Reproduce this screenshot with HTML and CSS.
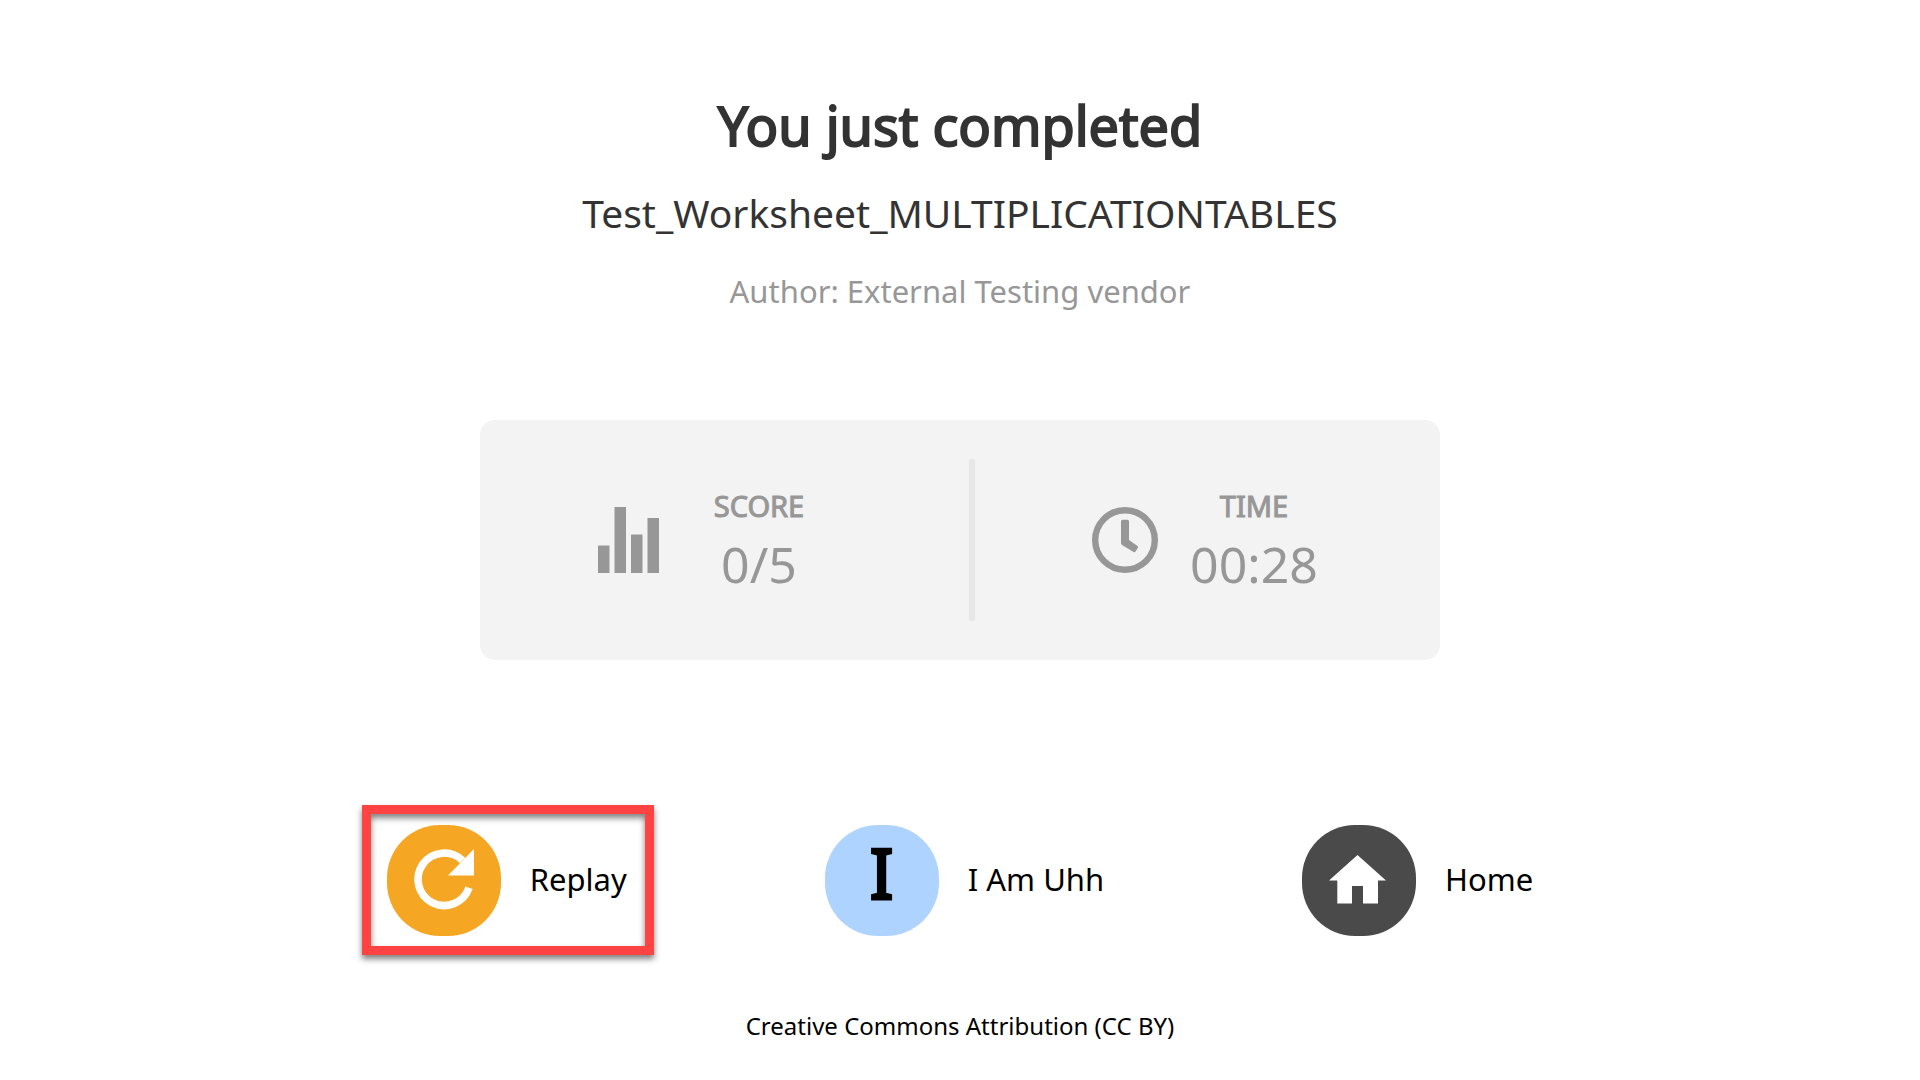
FILE: index.html
```html
<!DOCTYPE html>
<html lang="en">
<head>
<meta charset="utf-8">
<meta name="viewport" content="width=device-width, initial-scale=1">
<title>Worksheet completed</title>
<link rel="stylesheet" href="styles.css">
</head>
<body>
<main class="page">
  <header class="summary">
    <h1 class="title">You just completed</h1>
    <p class="worksheet">Test_Worksheet_MULTIPLICATIONTABLES</p>
    <p class="author">Author: External Testing vendor</p>
  </header>

  <section class="card" aria-label="Results">
    <div class="stat">
      <svg class="stat-icon" viewBox="0 0 66 66" aria-hidden="true">
        <path d="M1 38.500h11.500V66H1zM17.500 0H29v66H17.500zM34 27.500h11.500V66H34zM50.500 11H62v55H50.500z"/>
      </svg>
      <div class="stat-text">
        <h2 class="label">SCORE</h2>
        <p class="value">0/5</p>
      </div>
    </div>
    <div class="divider"></div>
    <div class="stat">
      <svg class="stat-icon" viewBox="0 0 66 66" aria-hidden="true">
        <circle class="clock-ring" cx="33" cy="33" r="29.800"/>
        <path d="M30.500 12.700h5q1.500 0 1.500 1.500V33l8.500 6q1 .8.300 1.900l-2.300 3.700q-.8 1.200-2 .4L30 38q-1-.8-1-2V14.200q0-1.500 1.500-1.500z"/>
      </svg>
      <div class="stat-text">
        <h2 class="label">TIME</h2>
        <p class="value">00:28</p>
      </div>
    </div>
  </section>

  <nav class="actions" aria-label="Next steps">
    <button class="action highlighted" type="button">
      <span class="badge replay">
        <svg class="badge-icon" viewBox="0 0 114 111" aria-hidden="true">
          <path class="replay-arc" d="M82 62.800A26.200 26.200 0 1 1 75.500 35.500"/>
          <path d="M87 24v26.500H61z"/>
        </svg>
      </span>
      <span class="action-name">Replay</span>
    </button>
    <button class="action" type="button">
      <span class="badge profile" aria-hidden="true">I</span>
      <span class="action-name">I Am Uhh</span>
    </button>
    <button class="action" type="button">
      <span class="badge home">
        <svg class="badge-icon" viewBox="0 0 114 111" aria-hidden="true">
          <path d="M55.500 30 84 55.500h-8V78.500H61V61H50v17.500H35.300v-23H27z"/>
        </svg>
      </span>
      <span class="action-name">Home</span>
    </button>
  </nav>

  <footer class="license">Creative Commons Attribution (CC BY)</footer>
</main>
</body>
</html>
```

FILE: styles.css
```css
* { box-sizing: border-box; }

body {
  margin: 0;
  background: #fff;
  color: #000;
  font-family: "Noto Sans", sans-serif;
}

h1, h2, p { margin: 0; font-weight: 400; }

.page {
  display: flex;
  flex-direction: column;
  align-items: center;
  padding: 84px 24px 32px;
}

.summary { text-align: center; color: #333; }

.title {
  font-size: 54px;
  line-height: 82px;
  -webkit-text-stroke: 2px currentColor;
}

.worksheet {
  margin-top: 17px;
  font-size: 39px;
  line-height: 60px;
  overflow-wrap: anywhere;
}

.author {
  margin-top: 24px;
  color: #979797;
  font-size: 31px;
  line-height: 48px;
}

.card {
  display: flex;
  align-items: center;
  width: 100%;
  max-width: 960px;
  min-height: 240px;
  margin-top: 105px;
  padding-right: 5px;
  border-radius: 15px;
  background: #f3f3f3;
  color: #979797;
}

.stat {
  display: flex;
  flex: 1;
  align-items: center;
  justify-content: center;
  gap: 32px;
}

.stat-icon { flex: none; width: 66px; height: 66px; fill: currentColor; }

.clock-ring { fill: none; stroke: currentColor; stroke-width: 6.4; }

.stat-text { min-width: 128px; text-align: center; }

.label {
  font-size: 29px;
  line-height: 48px;
  -webkit-text-stroke: 1px currentColor;
}

.value { font-size: 50px; line-height: 68px; }

.divider {
  width: 6px;
  height: 162px;
  margin-left: 29px;
  border-radius: 1px;
  background: #e7e7e7;
}

.actions {
  display: flex;
  flex-wrap: wrap;
  justify-content: center;
  gap: 48px 198px;
  margin-top: 165px;
}

.action {
  position: relative;
  display: flex;
  align-items: center;
  gap: 29px;
  padding: 0;
  border: 0;
  background: none;
  color: #000;
  font: inherit;
  font-size: 31px;
  cursor: pointer;
}

.action-name { padding-bottom: 3px; }

/* frame drawn over the recommended action */
.highlighted::after {
  position: absolute;
  inset: -20px -27px -19px -25px;
  border: 9px solid #ff4343;
  box-shadow: 0 4px 6px rgba(0, 0, 0, .5), inset 0 4px 6px rgba(0, 0, 0, .5);
  content: "";
  pointer-events: none;
}

.badge {
  width: 114px;
  height: 111px;
  border-radius: 53px;
}

.badge-icon { display: block; width: 100%; height: 100%; fill: #fff; }

.replay { background: #f5a623; }
.replay-arc { fill: none; stroke: #fff; stroke-width: 7.6; }
.home { background: #4a4a4a; }

.profile {
  background: #aed3ff;
  font-size: 70px;
  line-height: 94px;
  -webkit-text-stroke: 3px currentColor;
}

.license {
  margin-top: 72px;
  font-size: 24px;
  line-height: 36px;
  text-align: center;
}
```
